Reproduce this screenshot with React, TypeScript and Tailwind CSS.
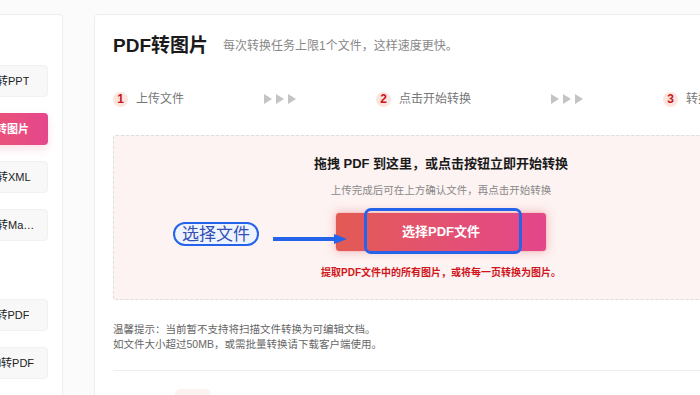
import { FileText, Image as ImageIcon, FileCode, FileType, Presentation } from "lucide-react";

const fromPdf = [
  { label: "PDF转PPT", icon: Presentation },
  { label: "PDF转图片", icon: ImageIcon, active: true },
  { label: "PDF转XML", icon: FileCode },
  { label: "PDF转Markdown", icon: FileType },
];

const toPdf = [
  { label: "PPT转PDF", icon: Presentation },
  { label: "Word转PDF", icon: FileText },
];

function SideButton({ label, icon: Icon, active }: { label: string; icon: any; active?: boolean }) {
  return (
    <div
      className={
        active
          ? "flex items-center gap-[9px] h-[32px] pl-[12px] pr-[11px] rounded-[4px] bg-gradient-to-r from-[#ef5d5d] to-[#e5468c] text-white font-bold shadow-[0_4px_10px_rgba(232,80,120,0.18)]"
          : "flex items-center gap-[9px] h-[32px] pl-[12px] pr-[11px] rounded-[4px] bg-[#f8f8f8] border border-[#f1f1f1] text-[#222]"
      }
    >
      <Icon className="w-[18px] h-[18px] shrink-0" />
      <span className="truncate text-[11px]">{label}</span>
    </div>
  );
}

function StepArrows() {
  return (
    <div className="flex items-center gap-[4px]">
      {[0, 1, 2].map((i) => (
        <svg key={i} width="8" height="10" viewBox="0 0 8 10">
          <path d="M0 0 L8 5 L0 10 Z" fill="#c4c4c4" />
        </svg>
      ))}
    </div>
  );
}

function Step({ n, text }: { n: number; text: string }) {
  return (
    <div className="flex items-center gap-[8px] shrink-0">
      <span className="w-[15px] h-[15px] rounded-full bg-[#fde5df] text-[#c8161d] text-[12px] font-bold flex items-center justify-center leading-none">
        {n}
      </span>
      <span className="text-[12px] text-[#777]">{text}</span>
    </div>
  );
}

export default function App() {
  return (
    <div className="w-[700px] h-[395px] overflow-hidden bg-[#fbfbfb] flex items-start gap-[31px] pt-[14px] font-['Liberation_Sans','Noto_Sans_CJK_SC',sans-serif]">
      {/* sidebar */}
      <aside className="w-[143px] -ml-[80px] shrink-0 h-[420px] bg-white border border-[#eeeeee] rounded-[4px] px-[14px] pt-[50px]">
        <div className="flex flex-col gap-[16px]">
          {fromPdf.map((b) => (
            <SideButton key={b.label} {...b} />
          ))}
        </div>
        <div className="flex flex-col gap-[16px] mt-[58px]">
          {toPdf.map((b) => (
            <SideButton key={b.label} {...b} />
          ))}
        </div>
      </aside>

      {/* main */}
      <main className="w-[694px] shrink-0 h-[420px] bg-white border border-[#eeeeee] rounded-[4px] px-[18px] pt-[19px]">
        <div className="flex items-center gap-[15px] h-[24px]">
          <h1 className="text-[19px] font-bold text-[#1a1a1a]">PDF转图片</h1>
          <p className="text-[12px] text-[#888]">每次转换任务上限1个文件，这样速度更快。</p>
        </div>

        <div className="flex items-center gap-[80px] h-[20px] mt-[31px]">
          <Step n={1} text="上传文件" />
          <StepArrows />
          <Step n={2} text="点击开始转换" />
          <StepArrows />
          <Step n={3} text="转换完成下载" />
        </div>

        <div className="mt-[26px] h-[165px] border border-dashed border-[#dddddd] rounded-[3px] bg-[#fdf3f2] flex flex-col items-center pt-[19px]">
          <div className="text-[13px] font-bold text-[#1a1a1a] leading-[18px]">拖拽 PDF 到这里，或点击按钮立即开始转换</div>
          <div className="mt-[10px] text-[10.5px] text-[#888] leading-[14px]">上传完成后可在上方确认文件，再点击开始转换</div>
          <div className="relative mt-[15px]">
            <button className="w-[212px] h-[40px] rounded-[4px] bg-gradient-to-r from-[#e35a53] to-[#e4468b] border border-[#f6c9c9] text-white text-[13px] font-bold shadow-[0_0_10px_rgba(228,80,90,0.35)]">
              选择PDF文件
            </button>
            <div className="absolute left-[29px] top-[-4px] w-[158px] h-[46px] border-[3px] border-[#2563eb] rounded-[7px]" />
            <div className="absolute left-[-162px] top-[10px] h-[24px] px-[7px] flex items-center rounded-[12px] border-2 border-[#2563eb] bg-[#eef4ff] text-[17px] text-[#3450b4] leading-none">
              选择文件
            </div>
            <svg className="absolute left-[-62px] top-[21px]" width="74" height="12" viewBox="0 0 74 12">
              <rect x="0" y="4" width="64" height="4" fill="#2563eb" />
              <path d="M61 1 L74 6 L61 11 Z" fill="#2563eb" />
            </svg>
          </div>
          <div className="mt-[14px] text-[10px] font-semibold text-[#d0161b] leading-[14px]">
            提取PDF文件中的所有图片，或将每一页转换为图片。
          </div>
        </div>

        <div className="mt-[22px] text-[10.5px] text-[#666] leading-[15px]">
          <p>温馨提示：当前暂不支持将扫描文件转换为可编辑文档。</p>
          <p>如文件大小超过50MB，或需批量转换请下载客户端使用。</p>
        </div>

        <div className="mt-[18px] border-t border-[#eeeeee]" />
        <div className="mt-[18px] ml-[62px] w-[36px] h-[10px] rounded-full bg-[#fdf2f2]" />
      </main>
    </div>
  );
}
